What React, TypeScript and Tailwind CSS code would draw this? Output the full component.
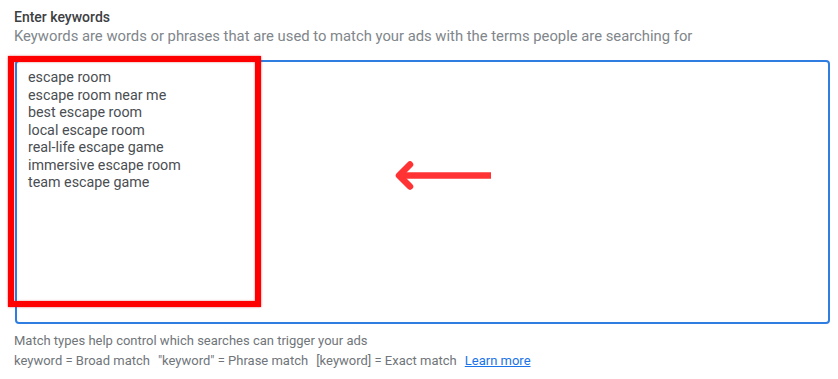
import React from "react";

const keywords = [
  "escape room",
  "escape room near me",
  "best escape room",
  "local escape room",
  "real-life escape game",
  "immersive escape room",
  "team escape game",
];

export default function App() {
  return (
    <div
      className="relative w-[838px] h-[379px] bg-white overflow-hidden"
      style={{ fontFamily: "Roboto, 'Liberation Sans', sans-serif" }}
    >
      <div className="pl-[14px] pt-[8px]">
        <div className="text-[14px] leading-[18px] font-medium text-[#3c4043]">Enter keywords</div>
        <div className="text-[14.8px] leading-[20px] text-[#80868b]">
          Keywords are words or phrases that are used to match your ads with the terms people are searching for
        </div>
        <div className="mt-[14px] ml-[1px] w-[815px] h-[264px] border-2 border-[#2f7de1] rounded-[4px] pl-[11px] pt-[7px]">
          {keywords.map((k) => (
            <div key={k} className="text-[14.3px] leading-[17.5px] text-[#4a4e52]">
              {k}
            </div>
          ))}
        </div>
        <div className="mt-[7px] text-[13px] leading-[20px] text-[#70757a]">
          Match types help control which searches can trigger your ads
        </div>
        <div className="text-[13px] leading-[20px] text-[#70757a] flex gap-[8px]">
          <span>keyword = Broad match</span>
          <span>"keyword" = Phrase match</span>
          <span>[keyword] = Exact match</span>
          <span className="text-[#1a73e8] underline">Learn more</span>
        </div>
      </div>

      <div className="absolute left-[8px] top-[56px] w-[253px] h-[251px] border-[6px] border-[#ff0000] shadow-[0_0_2px_rgba(200,0,0,0.6),inset_0_0_2px_rgba(200,0,0,0.6)]" />

      <svg className="absolute left-[390px] top-[158px]" width="110" height="36" viewBox="0 0 110 36">
        <g stroke="#ff3333" strokeWidth="6.5" strokeLinecap="round" strokeLinejoin="round" fill="none">
          <line x1="12" y1="17.5" x2="101" y2="17.5" strokeLinecap="butt" />
          <polyline points="20,6.5 9,17.5 20,28.5" />
        </g>
      </svg>
    </div>
  );
}
